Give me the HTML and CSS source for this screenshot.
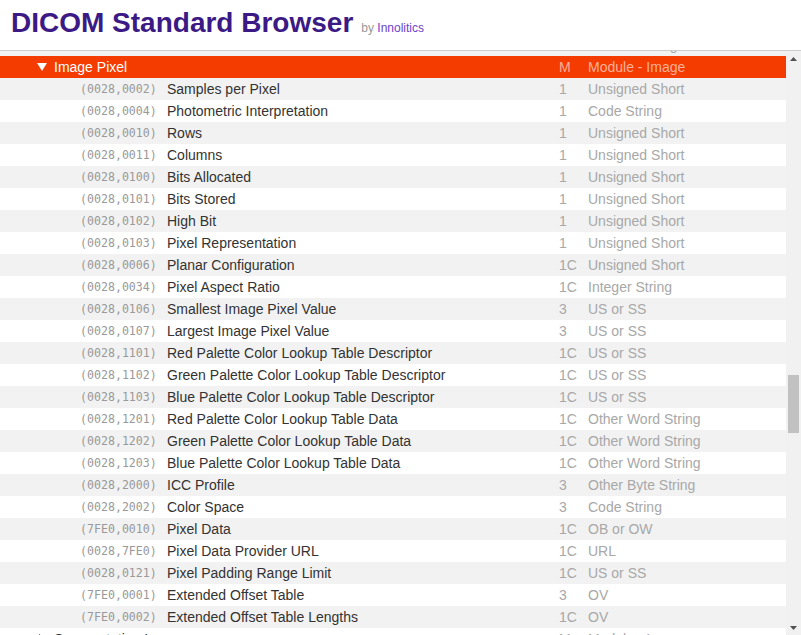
FILE: index.html
```html
<!DOCTYPE html>
<html>
<head>
<meta charset="utf-8">
<title>DICOM Standard Browser</title>
<link rel="stylesheet" href="styles.css">
</head>
<body>
<header class="header">
  <h1 class="title">DICOM Standard Browser</h1>
  <span class="by">by <a class="brand" href="#">Innolitics</a></span>
</header>
<div class="main">
  <div class="viewport">
    <div class="list">
      <div class="row module odd"><span class="caret"><svg width="10" height="10" viewBox="0 0 10 10"><path d="M2 0 L9 5 L2 10 Z" fill="#333"/></svg></span><span class="mname">Contrast/Bolus</span><span class="type">C</span><span class="vr">Module - Image</span></div>
      <div class="row module open"><span class="caret"><svg width="10" height="8" viewBox="0 0 10 8"><path d="M0 0 H10 L5 8 Z" fill="#fff"/></svg></span><span class="mname">Image Pixel</span><span class="type">M</span><span class="vr">Module - Image</span></div>
      <div class="row attr odd"><span class="tag">(0028,0002)</span><span class="name">Samples per Pixel</span><span class="type">1</span><span class="vr">Unsigned Short</span></div>
      <div class="row attr"><span class="tag">(0028,0004)</span><span class="name">Photometric Interpretation</span><span class="type">1</span><span class="vr">Code String</span></div>
      <div class="row attr odd"><span class="tag">(0028,0010)</span><span class="name">Rows</span><span class="type">1</span><span class="vr">Unsigned Short</span></div>
      <div class="row attr"><span class="tag">(0028,0011)</span><span class="name">Columns</span><span class="type">1</span><span class="vr">Unsigned Short</span></div>
      <div class="row attr odd"><span class="tag">(0028,0100)</span><span class="name">Bits Allocated</span><span class="type">1</span><span class="vr">Unsigned Short</span></div>
      <div class="row attr"><span class="tag">(0028,0101)</span><span class="name">Bits Stored</span><span class="type">1</span><span class="vr">Unsigned Short</span></div>
      <div class="row attr odd"><span class="tag">(0028,0102)</span><span class="name">High Bit</span><span class="type">1</span><span class="vr">Unsigned Short</span></div>
      <div class="row attr"><span class="tag">(0028,0103)</span><span class="name">Pixel Representation</span><span class="type">1</span><span class="vr">Unsigned Short</span></div>
      <div class="row attr odd"><span class="tag">(0028,0006)</span><span class="name">Planar Configuration</span><span class="type">1C</span><span class="vr">Unsigned Short</span></div>
      <div class="row attr"><span class="tag">(0028,0034)</span><span class="name">Pixel Aspect Ratio</span><span class="type">1C</span><span class="vr">Integer String</span></div>
      <div class="row attr odd"><span class="tag">(0028,0106)</span><span class="name">Smallest Image Pixel Value</span><span class="type">3</span><span class="vr">US or SS</span></div>
      <div class="row attr"><span class="tag">(0028,0107)</span><span class="name">Largest Image Pixel Value</span><span class="type">3</span><span class="vr">US or SS</span></div>
      <div class="row attr odd"><span class="tag">(0028,1101)</span><span class="name">Red Palette Color Lookup Table Descriptor</span><span class="type">1C</span><span class="vr">US or SS</span></div>
      <div class="row attr"><span class="tag">(0028,1102)</span><span class="name">Green Palette Color Lookup Table Descriptor</span><span class="type">1C</span><span class="vr">US or SS</span></div>
      <div class="row attr odd"><span class="tag">(0028,1103)</span><span class="name">Blue Palette Color Lookup Table Descriptor</span><span class="type">1C</span><span class="vr">US or SS</span></div>
      <div class="row attr"><span class="tag">(0028,1201)</span><span class="name">Red Palette Color Lookup Table Data</span><span class="type">1C</span><span class="vr">Other Word String</span></div>
      <div class="row attr odd"><span class="tag">(0028,1202)</span><span class="name">Green Palette Color Lookup Table Data</span><span class="type">1C</span><span class="vr">Other Word String</span></div>
      <div class="row attr"><span class="tag">(0028,1203)</span><span class="name">Blue Palette Color Lookup Table Data</span><span class="type">1C</span><span class="vr">Other Word String</span></div>
      <div class="row attr odd"><span class="tag">(0028,2000)</span><span class="name">ICC Profile</span><span class="type">3</span><span class="vr">Other Byte String</span></div>
      <div class="row attr"><span class="tag">(0028,2002)</span><span class="name">Color Space</span><span class="type">3</span><span class="vr">Code String</span></div>
      <div class="row attr odd"><span class="tag">(7FE0,0010)</span><span class="name">Pixel Data</span><span class="type">1C</span><span class="vr">OB or OW</span></div>
      <div class="row attr"><span class="tag">(0028,7FE0)</span><span class="name">Pixel Data Provider URL</span><span class="type">1C</span><span class="vr">URL</span></div>
      <div class="row attr odd"><span class="tag">(0028,0121)</span><span class="name">Pixel Padding Range Limit</span><span class="type">1C</span><span class="vr">US or SS</span></div>
      <div class="row attr"><span class="tag">(7FE0,0001)</span><span class="name">Extended Offset Table</span><span class="type">3</span><span class="vr">OV</span></div>
      <div class="row attr odd"><span class="tag">(7FE0,0002)</span><span class="name">Extended Offset Table Lengths</span><span class="type">1C</span><span class="vr">OV</span></div>
      <div class="row module"><span class="caret"><svg width="10" height="10" viewBox="0 0 10 10"><path d="M2 0 L9 5 L2 10 Z" fill="#333"/></svg></span><span class="mname">Segmentation Image</span><span class="type">M</span><span class="vr">Module - Image</span></div>
    </div>
  </div>
  <div class="scrollbar">
    <div class="sb-btn"><svg width="7" height="4" viewBox="0 0 7 4"><path d="M0 4 L3.5 0 L7 4 Z" fill="#505050"/></svg></div>
    <div class="sb-track"><div class="sb-thumb"></div></div>
    <div class="sb-btn"><svg width="7" height="4" viewBox="0 0 7 4"><path d="M0 0 H7 L3.5 4 Z" fill="#505050"/></svg></div>
  </div>
</div>
</body>
</html>
```
FILE: styles.css
```css
* { box-sizing: border-box; }
html, body { margin: 0; padding: 0; }
body {
  width: 801px;
  height: 635px;
  overflow: hidden;
  background: #fff;
  font-family: "Liberation Sans", Arial, sans-serif;
  color: #333;
}
.header {
  height: 51px;
  border-bottom: 1px solid #cccccc;
  display: flex;
  align-items: baseline;
  padding: 9px 0 0 11px;
}
.title {
  margin: 0;
  font-size: 28px;
  line-height: 28px;
  font-weight: bold;
  color: #3b1a85;
}
.by {
  margin-left: 8px;
  font-size: 12px;
  color: #999;
}
.brand {
  color: #6a44cc;
  text-decoration: none;
}
.main {
  display: flex;
  height: 584px;
}
.viewport {
  flex: 1;
  overflow: hidden;
  background: #fff;
}
.list {
  margin-top: -17px;
}
.row {
  display: flex;
  align-items: center;
  height: 22px;
  font-size: 14px;
  line-height: 22px;
  white-space: nowrap;
  background: #fff;
}
.row.odd { background: #f2f2f2; }
.row.open { background: #f43b00; color: #fff; }
.module { padding-left: 37px; }
.caret {
  width: 17px;
  display: flex;
  align-items: center;
}
.caret svg { display: block; }
.mname { width: 505px; }
.attr { padding-left: 80px; }
.tag {
  width: 87px;
  font-family: "DejaVu Sans Mono", monospace;
  font-size: 11.6px;
  color: #999;
}
.name { width: 392px; }
.type { width: 29px; color: #a8a8a8; }
.vr { color: #a8a8a8; }
.row.open .type, .row.open .vr { color: rgba(255,255,255,0.6); }
.scrollbar {
  width: 15px;
  background: #f1f1f1;
  display: flex;
  flex-direction: column;
}
.sb-btn {
  height: 15px;
  display: flex;
  align-items: center;
  justify-content: center;
}
.sb-btn svg { display: block; }
.sb-track {
  flex: 1;
  padding: 309px 2px 0 2px;
}
.sb-thumb {
  height: 58px;
  background: #c1c1c1;
}
```
